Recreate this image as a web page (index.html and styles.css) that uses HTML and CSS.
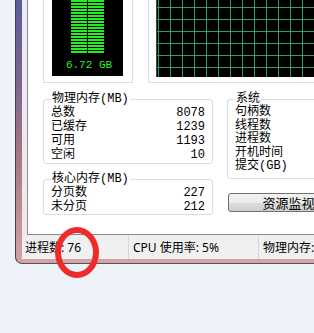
FILE: index.html
```html
<!DOCTYPE html>
<html lang="zh-CN">
<head>
    <meta charset="UTF-8">
    <title>任务管理器 - 性能</title>
    <link rel="stylesheet" href="styles.css">
</head>
<body>
    <div class="window">
        <div class="frame-inner">
            <div class="tabpage">
                <div class="graphs">
                    <div class="gbox mem-box">
                        <div class="mem-graph">
                            <div class="bars"><span></span><span></span></div>
                            <div class="mem-text">6.72 GB</div>
                        </div>
                    </div>
                    <div class="gbox hist-box">
                        <div class="hist-graph"></div>
                    </div>
                </div>

                <div class="stats">
                    <div class="col-left">
                        <fieldset class="group phys">
                            <legend>物理内存(MB)</legend>
                            <div class="row"><span>总数</span><span class="num">8078</span></div>
                            <div class="row"><span>已缓存</span><span class="num">1239</span></div>
                            <div class="row"><span>可用</span><span class="num">1193</span></div>
                            <div class="row"><span>空闲</span><span class="num">10</span></div>
                        </fieldset>
                        <fieldset class="group kernel">
                            <legend>核心内存(MB)</legend>
                            <div class="row"><span>分页数</span><span class="num">227</span></div>
                            <div class="row"><span>未分页</span><span class="num">212</span></div>
                        </fieldset>
                    </div>
                    <div class="col-right">
                        <fieldset class="group system">
                            <legend>系统</legend>
                            <div class="row"><span>句柄数</span></div>
                            <div class="row"><span>线程数</span></div>
                            <div class="row"><span>进程数</span></div>
                            <div class="row"><span>开机时间</span></div>
                            <div class="row"><span>提交(GB)</span></div>
                        </fieldset>
                        <button class="monitor-btn">资源监视器...</button>
                    </div>
                </div>
            </div>

            <div class="statusbar">
                <div class="sb-cell c1">进程数: 76</div>
                <div class="sb-cell c2">CPU 使用率: 5%</div>
                <div class="sb-cell c3">物理内存: 85%</div>
            </div>
        </div>
    </div>

    <div class="circle"></div>
</body>
</html>
```

FILE: styles.css
```css
html, body {
    overflow: hidden;
}
body {
    margin: 0;
    padding: 0;
    width: 314px;
    height: 333px;
    background-color: #edf1f8;
    font-family: "Noto Sans", "Noto Sans CJK SC", sans-serif;
    font-size: 12px;
    color: #000;
    position: relative;
}

/* Fensterrahmen */
.window {
    margin-left: 15px;
    width: 380px;
    padding: 0 0 4px 6px;
    border-left: 1px solid #3f3f58;
    border-bottom: 1px solid #5a5058;
    border-bottom-left-radius: 7px;
    background: linear-gradient(to bottom, #5b5d9b 0%, #7a6490 30%, #a87884 60%, #d3a3a5 100%);
}
.frame-inner {
    background: linear-gradient(to bottom, #eceaf4 0%, #f1e9ea 100%);
}
.tabpage {
    margin-left: 5px;
    background-color: #fff;
    border-left: 1px solid #898c95;
    border-bottom: 1px solid #898c95;
    height: 235px;
    padding-left: 15px;
    box-sizing: border-box;
}

/* Diagramme */
.graphs {
    display: flex;
    gap: 15px;
}
.gbox {
    border: 1px solid #d5dfe5;
    border-top: none;
    height: 83px;
    box-sizing: border-box;
}
.mem-box {
    width: 90px;
    padding-left: 8px;
}
.hist-box {
    flex: 1;
    padding-left: 7px;
}
.mem-graph {
    width: 71px;
    height: 76px;
    background-color: #000;
    padding-left: 19px;
    box-sizing: border-box;
}
.bars {
    display: flex;
    gap: 1px;
    height: 53px;
}
.bars span {
    width: 16px;
    background: repeating-linear-gradient(to bottom, #22ee22 0, #22ee22 2px, #000 2px, #000 3px);
}
.mem-text {
    font-family: "Liberation Mono", monospace;
    font-size: 11px;
    line-height: 14px;
    color: #2ee82e;
    margin-top: 5px;
    margin-left: -8px;
    width: 52px;
    text-align: center;
}
.hist-graph {
    height: 77px;
    background-color: #000;
    background-image:
        linear-gradient(to right, #349a62 1px, transparent 1px),
        linear-gradient(to bottom, #349a62 1px, transparent 1px);
    background-size: 12px 12px;
    background-position: 1px 7px;
    border-left: 1px solid #444;
}

/* Statistik */
.stats {
    display: flex;
    gap: 14px;
    margin-top: 9px;
    font-family: "Liberation Mono", "Noto Sans CJK SC", monospace;
    font-size: 12px;
}
.col-left {
    width: 170px;
    display: flex;
    flex-direction: column;
    gap: 8px;
}
.col-right {
    flex: 1;
}
.group {
    margin: 0;
    padding: 0 7px 1px 7px;
    border: 1px solid #d5dfe5;
    border-radius: 3px;
    min-width: 0;
}
.group legend {
    padding: 0 1px;
    line-height: 14px;
}
.row {
    display: flex;
    justify-content: space-between;
    line-height: 14px;
    height: 14px;
}
.kernel {
    padding-bottom: 0;
}
.system {
    padding-bottom: 4px;
    border-right: none;
    border-top-right-radius: 0;
    border-bottom-right-radius: 0;
}
.system .row {
    line-height: 13.5px;
    height: 13.5px;
}
.monitor-btn {
    display: block;
    margin: 14px 0 0 1px;
    width: 145px;
    height: 19px;
    padding: 0;
    font-family: "Noto Sans CJK SC", sans-serif;
    font-size: 13px;
    line-height: 17px;
    color: #000;
    border: 1px solid #707070;
    border-radius: 3px;
    background: linear-gradient(to bottom, #f2f2f2 0%, #ebebeb 50%, #dddddd 51%, #cfcfcf 100%);
}

/* Statusleiste */
.statusbar {
    display: flex;
    margin-top: 1px;
    height: 23px;
    background-color: #f0f0f0;
    line-height: 23px;
}
.sb-cell {
    white-space: nowrap;
    padding-left: 3px;
    box-sizing: border-box;
}
.c1 {
    width: 106px;
}
.c2 {
    width: 130px;
    border-left: 1px solid #d6d6d6;
    padding-left: 4px;
}
.c3 {
    border-left: 1px solid #d6d6d6;
    padding-left: 4px;
}

/* Markierung */
.circle {
    position: absolute;
    left: 55px;
    top: 227px;
    width: 44px;
    height: 51px;
    border: 6px solid #ee2b2b;
    border-radius: 50%;
    box-sizing: border-box;
}
```
